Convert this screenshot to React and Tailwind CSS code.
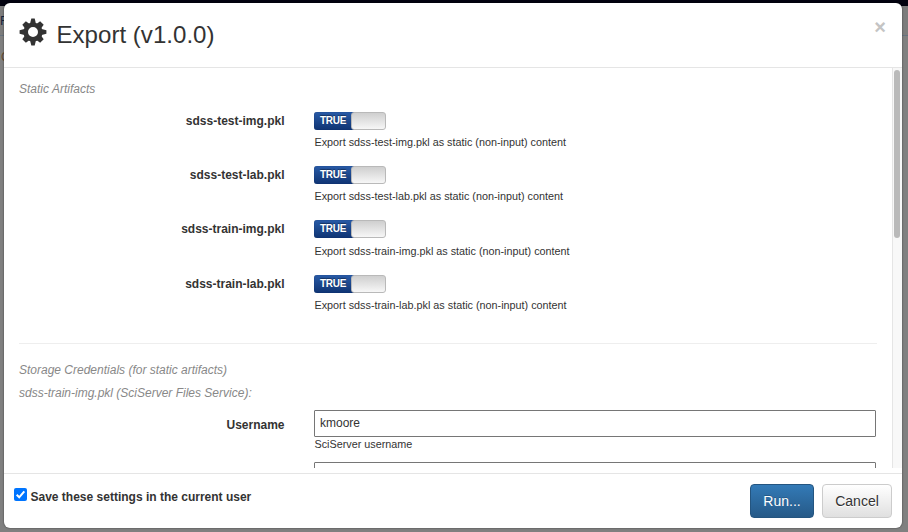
import React from "react";

const teeth = [0, 45, 90, 135, 180, 225, 270, 315];

function Gear() {
  return (
    <svg viewBox="-14 -14 28 28" className="ml-[0.5px] size-7 shrink-0">
      <circle r="7.3" fill="none" stroke="#333" strokeWidth="4.6" />
      {teeth.map((a, i) => (
        <path
          key={a}
          d={i % 2 ? "M-3.1-8.4L-2.5-12.6H2.5L3.1-8.4Z" : "M-2.9-8.6L-1.7-13.4H1.7L2.9-8.6Z"}
          fill="#333"
          transform={`rotate(${a})`}
        />
      ))}
    </svg>
  );
}

function Toggle() {
  return (
    <div className="flex h-[18px] w-[72px]">
      <span className="-mr-[3px] w-[40px] rounded-l-[3px] bg-linear-to-b from-[#295ba7] to-[#0f3473] pl-[6px] text-[10px] leading-[17px] font-bold tracking-[-0.3px] text-white shadow-[inset_0_0_1px_#0d2c63] [text-shadow:0_-1px_1px_#0006]">TRUE</span>
      <span className="h-[18px] flex-1 rounded-[3px] border border-[#b9b9b9] bg-linear-to-b from-[#cfcfcf] to-[#f7f7f7]" />
    </div>
  );
}

const artifacts = [
  { name: "sdss-test-img.pkl", row: "h-[54px]", help: "mt-[5px]" },
  { name: "sdss-test-lab.pkl", row: "h-[54px]", help: "mt-[5px]" },
  { name: "sdss-train-img.pkl", row: "h-[55px]", help: "mt-[6px]" },
  { name: "sdss-train-lab.pkl", row: "h-[60px]", help: "mt-[5px]" },
];

export default function App() {
  return (
    <div className="relative h-[532px] w-[908px] overflow-hidden bg-[#808080] font-['Liberation_Sans',Arial,sans-serif] text-[#333]">
      <div className="h-[6px] bg-[#02020f]" />
      <div className="h-[30px] border-b border-[#66727e] bg-[#7c7c7c] pt-[5px] text-[13px] text-[#14233c]">R</div>
      <div className="pt-[12px] pl-px text-[12px] text-[#664a30]">C</div>

      <div className="absolute top-[3px] left-[4px] flex h-[525px] w-[898px] flex-col overflow-hidden rounded-[6px] bg-white shadow-[0_0_2px_#0009]">
        <header className="flex h-[65px] shrink-0 border-b border-[#e5e5e5] pt-[15px] pl-[14px]">
          <Gear />
          <h1 className="ml-[10px] text-[24.1px] leading-[34px] whitespace-nowrap">Export (v1.0.0)</h1>
          <button className="mt-[-1px] mr-[16px] ml-auto h-5 text-[20px] leading-5 font-bold text-[#c4c4c4]">×</button>
        </header>

        <main className="flex h-[400px] shrink-0 overflow-hidden">
          <div className="w-[873px] pl-[15px]">
            <p className="pt-[13px] text-[12px] leading-4 text-[#888] italic">Static Artifacts</p>
            <div className="pt-[15px]">
              {artifacts.map((a) => (
                <div key={a.name} className={`flex ${a.row}`}>
                  <label className="w-[265.5px] text-right text-[12px] leading-[18px] font-bold">{a.name}</label>
                  <div className="ml-[29.5px]">
                    <Toggle />
                    <p className={`pl-[0.5px] text-[10.8px] leading-[14px] ${a.help}`}>Export {a.name} as static (non-input) content</p>
                  </div>
                </div>
              ))}
            </div>
            <div className="mt-[8px] h-px w-[858px] bg-[#eee]" />
            <p className="mt-[18px] text-[12px] leading-4 text-[#888] italic">Storage Credentials (for static artifacts)</p>
            <p className="mt-[7px] text-[12px] leading-4 text-[#888] italic">sdss-train-img.pkl (SciServer Files Service):</p>
            <div className="mt-[9px] flex">
              <label className="w-[265.5px] pt-[6px] text-right text-[12px] leading-[18px] font-bold">Username</label>
              <div className="ml-[29.5px] w-[562px]">
                <div className="h-[27px] rounded-[1px] border border-[#767676] pl-[5px] text-[12px] leading-[24px]">kmoore</div>
                <p className="pl-[0.5px] text-[10.8px] leading-[14px]">SciServer username</p>
                <div className="mt-[11px] h-[27px] rounded-[1px] border border-[#767676]" />
              </div>
            </div>
          </div>
          <div className="ml-auto w-[10px] border-l border-[#e5e5e5] bg-[#f8f8f8] pt-[2px] pl-px">
            <div className="h-[168px] w-[6px] rounded-[3px] bg-[#bababa]" />
          </div>
        </main>

        <footer className="mt-[5px] flex flex-1 border-t border-[#e5e5e5] pr-[10px] pl-[10px]">
          <svg viewBox="0 0 13 13" className="mt-[14px] size-[13px]">
            <rect width="13" height="13" rx="2" fill="#0075ff" />
            <path d="M2.7 6.8L5.2 9.3L10.3 3.3" fill="none" stroke="#fff" strokeWidth="2" />
          </svg>
          <label className="mt-[14px] ml-[3.5px] text-[12px] leading-[18px] font-bold">Save these settings in the current user</label>
          <div className="mt-[10px] ml-auto flex h-[34px] gap-2 text-[14px]">
            <button className="w-16 rounded-[4px] border border-[#245580] bg-linear-to-b from-[#337ab7] to-[#265a88] text-white [text-shadow:0_-1px_0_#0003]">Run...</button>
            <button className="w-[70px] rounded-[4px] border border-[#ccc] bg-linear-to-b from-white to-[#e0e0e0] [text-shadow:0_1px_0_#fff]">Cancel</button>
          </div>
        </footer>
      </div>
    </div>
  );
}
